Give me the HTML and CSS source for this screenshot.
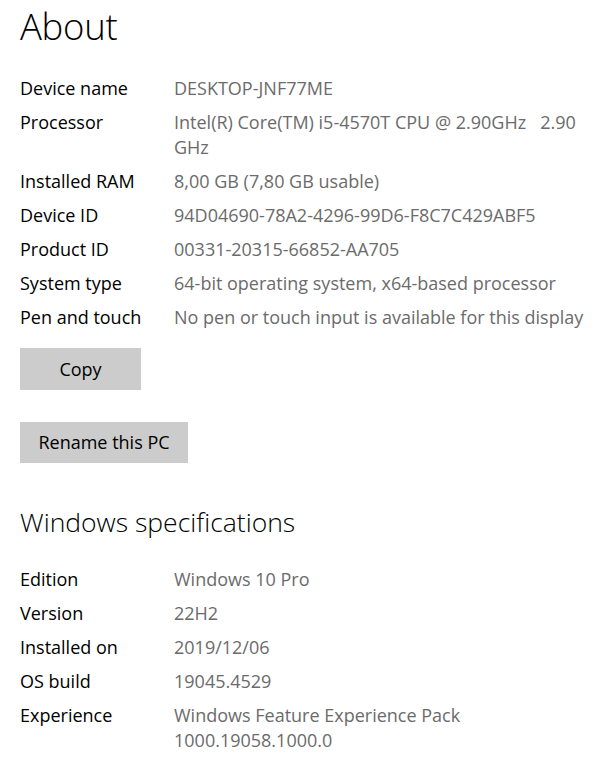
FILE: index.html
```html
<!DOCTYPE html>
<html lang="en">
<head>
<meta charset="utf-8">
<title>About</title>
<link rel="stylesheet" href="styles.css">
</head>
<body>
<main class="page">
  <h1 class="title">About</h1>
  <dl class="specs">
    <dt>Device name</dt><dd>DESKTOP-JNF77ME</dd>
    <dt>Processor</dt><dd>Intel(R) Core(TM) i5-4570T CPU @ 2.90GHz&nbsp;&nbsp;&nbsp;2.90 GHz</dd>
    <dt>Installed RAM</dt><dd>8,00 GB (7,80 GB usable)</dd>
    <dt>Device ID</dt><dd>94D04690-78A2-4296-99D6-F8C7C429ABF5</dd>
    <dt>Product ID</dt><dd>00331-20315-66852-AA705</dd>
    <dt>System type</dt><dd>64-bit operating system, x64-based processor</dd>
    <dt>Pen and touch</dt><dd>No pen or touch input is available for this display</dd>
  </dl>
  <div class="actions">
    <button class="btn btn-copy" type="button">Copy</button>
    <button class="btn btn-rename" type="button">Rename this PC</button>
  </div>
  <h2 class="subtitle">Windows specifications</h2>
  <dl class="specs">
    <dt>Edition</dt><dd>Windows 10 Pro</dd>
    <dt>Version</dt><dd>22H2</dd>
    <dt>Installed on</dt><dd>2019/12/06</dd>
    <dt>OS build</dt><dd>19045.4529</dd>
    <dt>Experience</dt><dd>Windows Feature Experience Pack 1000.19058.1000.0</dd>
  </dl>
</main>
</body>
</html>
```

FILE: styles.css
```css
html, body {
  margin: 0;
  padding: 0;
  background: #ffffff;
}

body {
  font-family: "Open Sans", "Noto Sans", "Liberation Sans", sans-serif;
  color: #000000;
  font-size: 18px;
  line-height: 25px;
}

.page {
  padding: 0 4px 0 20px;
}

.title {
  margin: 0;
  padding-top: 2px;
  font-size: 36.5px;
  line-height: 48px;
  font-weight: 300;
  letter-spacing: -0.3px;
}

.specs {
  display: grid;
  grid-template-columns: 154px 1fr;
  row-gap: 9px;
  margin: 26px 0 0;
}

.specs dt {
  margin: 0;
  color: #000000;
}

.specs dd {
  margin: 0;
  color: #6b6b6b;
}

.actions {
  display: flex;
  flex-direction: column;
  align-items: flex-start;
  gap: 32px;
  margin-top: 18px;
}

.btn {
  font: inherit;
  color: #000000;
  background: #cccccc;
  border: 0;
  padding: 0;
  margin: 0;
}

.btn-copy {
  width: 121px;
  height: 42px;
}

.btn-rename {
  width: 168px;
  height: 41px;
}

.subtitle {
  margin: 41px 0 0;
  font-size: 26.5px;
  line-height: 36px;
  font-weight: 300;
}

.subtitle + .specs {
  margin-top: 27px;
}
```
